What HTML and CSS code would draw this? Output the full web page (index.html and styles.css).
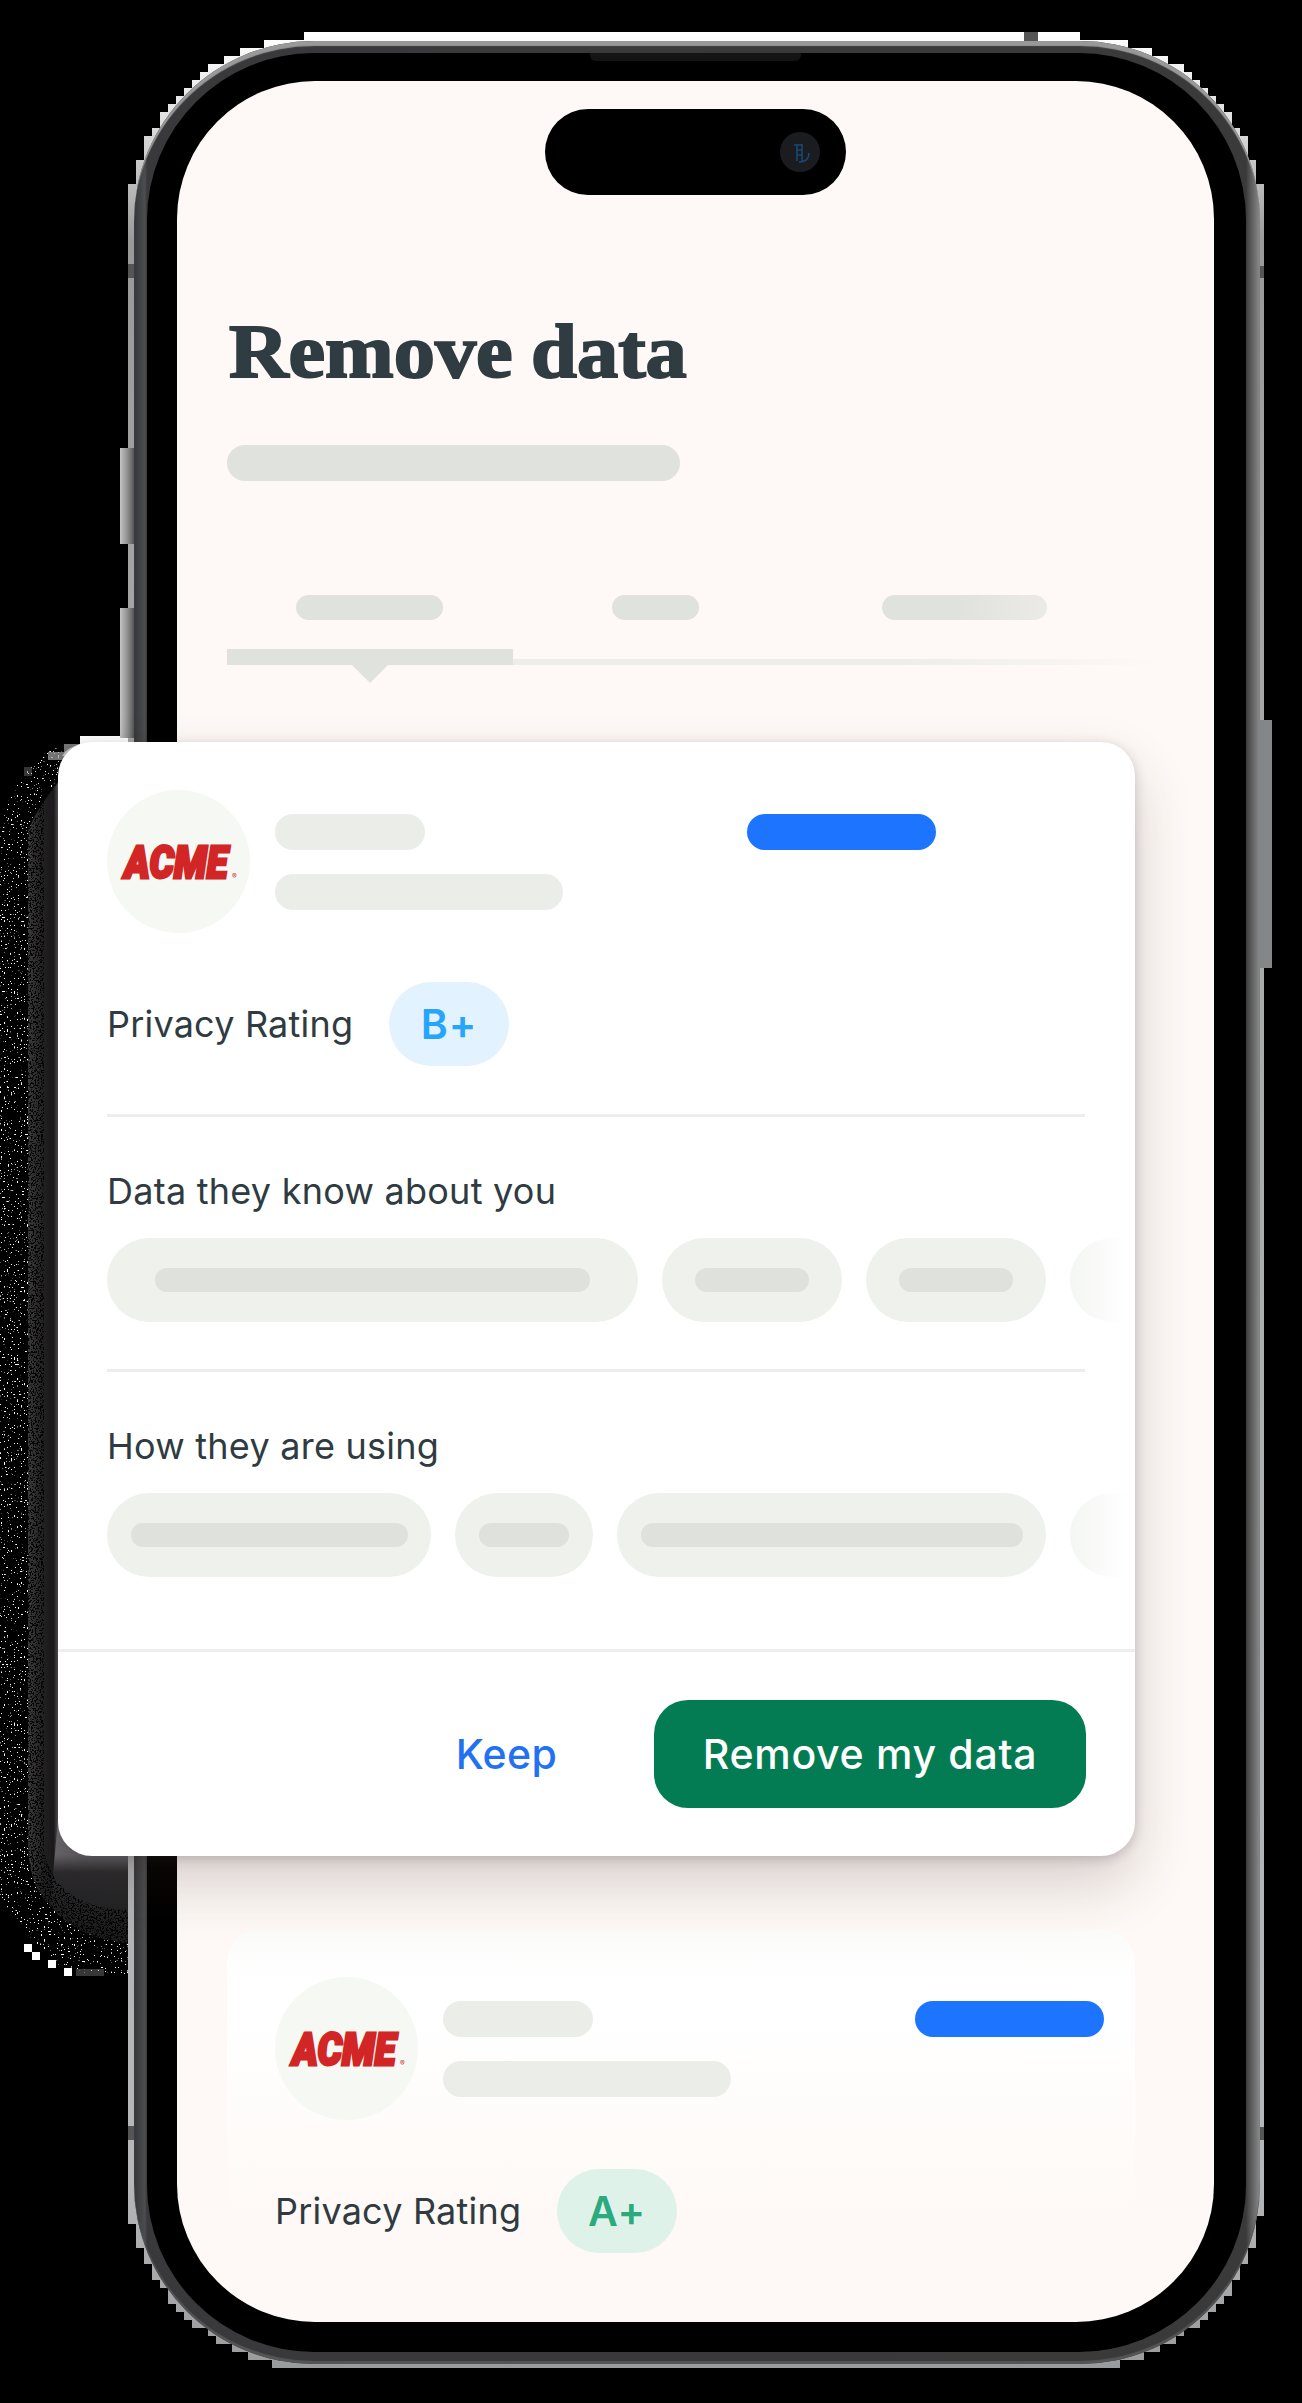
FILE: index.html
```html
<!DOCTYPE html>
<html lang="en">
<head>
<meta charset="utf-8">
<title>Remove data</title>
<link rel="stylesheet" href="styles.css">
</head>
<body>
<main class="stage">
  <svg class="backdrop" width="1302" height="2403" viewBox="0 0 1302 2403" aria-hidden="true">
    <defs>
      <linearGradient id="rim" x1="0" y1="0" x2="0" y2="1">
        <stop offset="0" stop-color="#fff"/><stop offset=".04" stop-color="#ddd"/><stop offset=".09" stop-color="#999"/><stop offset=".25" stop-color="#a5a5a5"/><stop offset=".92" stop-color="#b5b7b8"/><stop offset="1" stop-color="#999b9c"/>
      </linearGradient>
      <linearGradient id="halo" gradientUnits="userSpaceOnUse" x1="28" x2="60" y1="0" y2="0">
        <stop offset="0" stop-color="#3d3d3e"/><stop offset=".5" stop-color="#202021"/><stop offset=".8" stop-color="#19191a"/><stop offset="1" stop-color="#6d6c72"/>
      </linearGradient>
      <linearGradient id="under" x1="0" x2="0" y1="0" y2="1">
        <stop offset="0" stop-color="#77767b"/><stop offset=".28" stop-color="#66656a"/><stop offset=".42" stop-color="#2a2a2c"/><stop offset="1" stop-color="#1b1b1c"/>
      </linearGradient>
      <linearGradient id="key" x1="0" x2="1" y1="0" y2="0">
        <stop offset="0" stop-color="#c4c4c4"/><stop offset=".55" stop-color="#8e8e8e"/><stop offset="1" stop-color="#555"/>
      </linearGradient>
      <filter id="specks" x="0" y="0" width="1" height="1" color-interpolation-filters="sRGB">
        <feTurbulence type="fractalNoise" baseFrequency=".7" numOctaves="1" seed="4"/>
        <feColorMatrix values="0 0 0 0 1  0 0 0 0 1  0 0 0 0 1  24 0 0 0 -15.8"/>
        <feComposite in2="SourceGraphic" operator="in"/>
      </filter>
      <filter id="grain" x="0" y="0" width="1" height="1" color-interpolation-filters="sRGB">
        <feTurbulence type="fractalNoise" baseFrequency=".6" numOctaves="2" seed="9"/>
        <feColorMatrix values="0 0 0 0 0  0 0 0 0 0  0 0 0 0 0  10 0 0 0 -5"/>
        <feComposite in2="SourceGraphic" operator="in"/>
      </filter>
    </defs>
    <path fill="url(#halo)" d="M60 780V1856L50 1906Q28 1885 28 1840V832Q34 812 60 780Z"/>
    <path fill="url(#under)" d="M58 1820L90 1856H134V1944Q78 1940 50 1906Z"/>
    <path filter="url(#grain)" d="M28 830L44 800V1850Q55 1910 134 1910V1946Q78 1940 50 1906Q28 1885 28 1840Z"/>
    <path fill="#fff" filter="url(#specks)" d="M0 830L12 790L40 756L64 744L58 780Q34 812 28 832V1840Q28 1885 50 1906Q78 1940 134 1944V1974H90L60 1966L18 1925L0 1895Z"/>
    <path fill="#fff" d="M24 1944h8v8h-8zM32 1952h8v8h-8zM48 1960h8v8h-8zM64 1968h8v8h-8zM80 736h48v20H62q4-8 18-12z"/>
    <path fill="#aaa" d="M64 744h16v6l-12 8h-4zM48 752h16v8H48z" opacity=".7"/>
    <path fill="#8a8a8a" d="M76 1969h28v7H76zM24 767h8v9h-8z" opacity=".4"/>
    <path fill="url(#rim)" d="M304 32H1080V40H1128V48H1152V56H1168V64H1184V72H1192V80H1200V88H1208V96H1216V104H1224V112H1232V128H1240V136H1248V160H1256V184H1264V2216H1256V2248H1248V2264H1240V2280H1232V2296H1224V2304H1216V2312H1208V2320H1200V2328H1184V2336H1176V2344H1160V2352H1144V2360H1120V2368H272V2360H248V2352H232V2344H216V2336H208V2328H192V2320H184V2312H176V2304H168V2288H160V2280H152V2264H144V2248H136V2224H128V184H136V160H144V136H152V128H160V112H168V104H176V96H184V88H192V80H200V72H208V64H224V56H240V48H264V40H304Z"/>
    <path fill="url(#key)" d="M120 448h14v96h-14zM120 608h14v130h-14z"/>
    <path fill="#858688" d="M1256 720h16v248h-16z"/>
    <path fill="#555" d="M128 264h8v14h-8zM1256 266h8v12h-8zM128 2126h8v14h-8zM1256 2127h8v13h-8zM1024 32h14v10h-14z"/>
  </svg>

  <section class="phone">
    <div class="bezel">
      <div class="speaker"></div>
      <div class="screen">
        <div class="island"><svg width="40" height="40" viewBox="0 0 40 40"><circle cx="20" cy="20" r="20" fill="#1b1c1f"/><path d="M17 12v17m5-17v17M14 13h8m-5 5h5m-5 5h5m-3 7q10 0 10-9" fill="none" stroke="#194777" stroke-width="1.6"/></svg></div>
        <h1 class="title">Remove data</h1>
        <div class="bar subtitle"></div>
        <div class="tabs">
          <div class="bar tab tab-one"></div><div class="bar tab tab-two"></div><div class="bar tab tab-three"></div>
        </div>
        <div class="tabline"><div class="active"></div><div class="rest"></div></div>
        <div class="pointer"></div>
        <article class="card next">
          <header class="company">
            <div class="logo"><svg width="143" height="143" viewBox="0 0 143 143"><text class="brand" transform="translate(17.5 88)" textLength="103" lengthAdjust="spacingAndGlyphs">ACME</text><text class="mark" x="125" y="89">®</text></svg></div>
            <div class="lines"><div class="bar line short"></div><div class="bar line"></div></div>
            <div class="bar link"></div>
          </header>
          <div class="rating"><span class="label">Privacy Rating</span><span class="grade grade-a">A+</span></div>
        </article>
      </div>
    </div>
  </section>

  <article class="card front">
    <header class="company">
      <div class="logo"><svg width="143" height="143" viewBox="0 0 143 143"><text class="brand" transform="translate(17.5 88)" textLength="103" lengthAdjust="spacingAndGlyphs">ACME</text><text class="mark" x="125" y="89">®</text></svg></div>
      <div class="lines"><div class="bar line short"></div><div class="bar line"></div></div>
      <div class="bar link"></div>
    </header>
    <div class="rating"><span class="label">Privacy Rating</span><span class="grade grade-b">B+</span></div>
    <section class="group">
      <h2 class="label">Data they know about you</h2>
      <div class="chips">
        <div class="chip wide"><i></i></div><div class="chip small"><i></i></div><div class="chip small"><i></i></div><div class="chip cut"></div>
      </div>
    </section>
    <section class="group">
      <h2 class="label">How they are using</h2>
      <div class="chips">
        <div class="chip medium"><i></i></div><div class="chip tiny"><i></i></div><div class="chip large"><i></i></div><div class="chip cut"></div>
      </div>
    </section>
    <footer class="actions"><button class="keep">Keep</button><button class="remove">Remove my data</button></footer>
  </article>
</main>
</body>
</html>
```
FILE: styles.css
```css
* { box-sizing: border-box; }
body { margin: 0; background: #000; font-family: Inter, "Liberation Sans", sans-serif; color: #2f3b40; }
.stage { position: relative; width: 1302px; height: 2403px; padding: 41px 0 0 134px; overflow: hidden; }
.backdrop { position: absolute; left: 0; top: 0; }

/* Device */
.phone { position: relative; width: 1126px; height: 2323px; padding: 12px 14px 12px 13px; border-radius: 180px; background: linear-gradient(90deg, #36373a, #4c4d4f 11px, #39393b 13px, #3a3a3b 1112px, #555 1116px, #8b8c8d); box-shadow: inset 0 6px 1px -1px #999, inset 0 -3px 1px #555; }
.bezel { height: 2299px; padding: 28px 33px 30px 30px; border-radius: 167px; background: #000; }
.speaker { position: absolute; left: 456px; top: 12px; width: 211px; height: 8px; background: #141414; border-radius: 0 0 6px 6px; }
.screen { width: 1037px; height: 2241px; padding: 28px 80px 0 50px; border-radius: 138px; background: #fef9f6; overflow: hidden; }
.island { width: 301px; height: 86px; margin-left: 318px; padding: 23px 26px 0 0; border-radius: 43px; background: #000; text-align: right; }
.title { height: 90px; margin: 111px 0 0 2px; font: bold 77px/90px "Liberation Serif", serif; word-spacing: -2px; white-space: nowrap; color: #2f3c41; -webkit-text-stroke: 2px #2f3c41; transform: scaleX(1.07); transform-origin: 0 0; }
.bar { border-radius: 18px; background: #e0e2dd; }
.subtitle { width: 453px; height: 36px; margin-top: 49px; }
.tabs { display: flex; margin: 114px 0 0 69px; }
.tab { height: 25px; }
.tab-one { width: 147px; }
.tab-two { width: 87px; margin-left: 169px; }
.tab-three { width: 165px; margin-left: 183px; background: linear-gradient(90deg, #e0e2dd 45%, #eceae6); }
.tabline { display: flex; align-items: flex-end; width: 940px; margin-top: 29px; margin-right: -33px; }
.active { width: 286px; height: 16px; background: #e0e2dd; }
.rest { flex: 1; height: 6px; background: linear-gradient(90deg, #edeee9 60%, #fef9f6); }
.pointer { width: 36px; height: 18px; margin-left: 125px; background: #e0e2dd; clip-path: polygon(0 0, 100% 0, 50% 100%); }

/* Cards */
.company { display: flex; align-items: flex-start; }
.logo { width: 143px; height: 143px; border-radius: 50%; background: #f5f8f3; }
.logo svg { display: block; }
.brand { font: italic 900 45px Roboto, sans-serif; fill: #d12526; stroke: #d12526; stroke-width: 3px; }
.mark { font: 7px Inter, sans-serif; fill: #c33; }
.lines { display: flex; flex-direction: column; gap: 24px; margin: 24px 0 0 25px; }
.line { width: 288px; height: 36px; background: #ebede8; }
.short { width: 150px; }
.link { width: 189px; height: 36px; margin-top: 24px; margin-left: 184px; background: #1d75ff; }
.rating { display: flex; align-items: center; height: 84px; margin-top: 49px; }
.label { margin: 0; font-size: 36px; font-weight: 400; line-height: 48px; letter-spacing: .2px; white-space: nowrap; }
.rating .label { width: 282px; margin-top: -1px; }
.grade { width: 120px; height: 84px; border-radius: 42px; font-size: 41px; font-weight: 600; line-height: 84px; text-align: center; letter-spacing: 1px; }
.grade-a { color: #2aaa7d; background: #dff2e9; }
.grade-b { color: #27a5fb; background: #e2f2ff; }
.next { width: 908px; height: 282px; margin-top: 1246px; padding: 48px 0 0 48px; border-radius: 34px 34px 0 0; background: linear-gradient(#fbfbfa, #fff 50px, #fff 90px, #fef9f6); }
.front { position: absolute; left: 58px; top: 742px; width: 1077px; height: 1114px; padding: 48px 0 0 49px; border-radius: 34px; background: #fff; box-shadow: 0 3px 12px rgba(45,42,50,.22), 0 28px 58px rgba(60,40,35,.2); overflow: hidden; }
.front .rating { margin-bottom: 48px; }
.group { height: 255px; }
.group::before { content: ""; display: block; width: 978px; height: 3px; margin-bottom: 50px; background: #eceeeb; }
.group .label { letter-spacing: .25px; }
.chips { display: flex; gap: 24px; margin-top: 23px; }
.chip { display: flex; flex: none; align-items: center; justify-content: center; height: 84px; border-radius: 42px; background: #eff1ed; }
.chip i { height: 24px; border-radius: 12px; background: #dfe1dc; }
.wide { width: 531px; }
.wide i { width: 435px; }
.small { width: 180px; }
.small i { width: 114px; }
.medium { width: 324px; }
.medium i { width: 277px; }
.tiny { width: 138px; }
.tiny i { width: 90px; }
.large { width: 429px; }
.large i { width: 382px; }
.cut { width: 70px; border-radius: 42px 0 0 42px; background: linear-gradient(90deg, #f4f6f3, #fff 58px); }
.actions { display: flex; align-items: flex-start; justify-content: flex-end; height: 207px; margin: 25px 0 0 -49px; padding: 48px 49px 0 0; border-top: 3px solid #eeefed; }
button { padding: 0; border: 0; font: 500 41px/108px Inter, sans-serif; letter-spacing: .4px; white-space: nowrap; }
.keep { width: 295px; background: none; color: #2271f3; }
.remove { width: 432px; height: 108px; border-radius: 34px; background: #047c53; color: #fff; letter-spacing: .7px; }
```
